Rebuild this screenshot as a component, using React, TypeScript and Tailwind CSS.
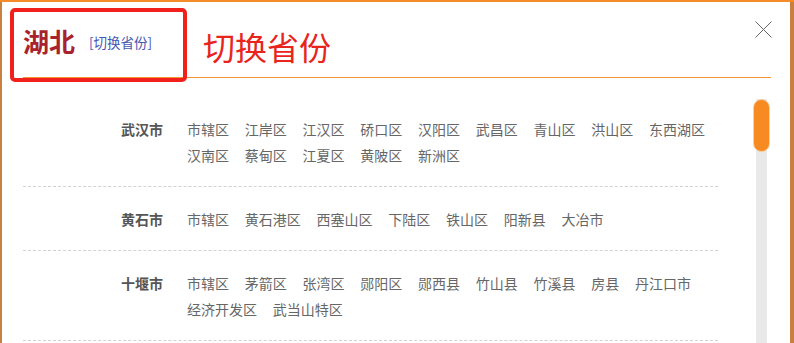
import React from "react";

const cities: { name: string; districts: string[] }[] = [
  {
    name: "武汉市",
    districts: ["市辖区", "江岸区", "江汉区", "硚口区", "汉阳区", "武昌区", "青山区", "洪山区", "东西湖区", "汉南区", "蔡甸区", "江夏区", "黄陂区", "新洲区"],
  },
  {
    name: "黄石市",
    districts: ["市辖区", "黄石港区", "西塞山区", "下陆区", "铁山区", "阳新县", "大冶市"],
  },
  {
    name: "十堰市",
    districts: ["市辖区", "茅箭区", "张湾区", "郧阳区", "郧西县", "竹山县", "竹溪县", "房县", "丹江口市", "经济开发区", "武当山特区"],
  },
];

export default function App() {
  return (
    <div
      className="relative h-[343px] w-[794px] overflow-hidden bg-[#c9803f] pl-[2px] pr-[4px] pt-[2px]"
      style={{ fontFamily: '"Noto Sans CJK SC", "Noto Sans", sans-serif' }}
    >
      <div className="absolute left-0 top-0 h-[2px] w-[794px] bg-[#f68b2a]" />
      <div className="relative h-[400px] bg-white pl-[21px] pr-[19px]">
        {/* header */}
        <div className="flex h-[75px] items-center pt-[3px]">
          <span className="text-[26px] font-bold leading-none text-[#a8232b]">湖北</span>
          <span className="ml-[14px] mt-[3px] text-[13.5px] leading-none text-[#4656b4]">[切换省份]</span>
        </div>
        <div className="h-px bg-[#f29535]" />

        {/* annotation */}
        <div className="absolute left-[8px] top-[6px] h-[74px] w-[177px] rounded-[5px] border-[4px] border-[#f2201a]" />
        <div className="absolute left-[201px] top-[24px] text-[32px] leading-[40px] text-[#e8241d]">切换省份</div>

        {/* close */}
        <svg className="absolute left-[753px] top-[19px]" width="17" height="17" viewBox="0 0 17 17">
          <path d="M0.5 0.5 L16.5 16.5 M16.5 0.5 L0.5 16.5" stroke="#666" strokeWidth="1" fill="none" />
        </svg>

        {/* body */}
        <div className="flex pt-[19px]">
          <div className="w-[695px]">
            {cities.map((c) => (
              <div key={c.name} className="flex border-b border-dashed border-[#d2d2d2] pb-[18px] pt-[19px]">
                <div className="w-[164px] shrink-0 pr-[24px] text-right text-[14px] font-bold leading-[26px] text-[#555]">
                  {c.name}
                </div>
                <div className="flex flex-1 flex-wrap gap-x-[15.75px] text-[14px] leading-[26px] text-[#666]">
                  {c.districts.map((d) => (
                    <span key={d}>{d}</span>
                  ))}
                </div>
              </div>
            ))}
          </div>
        </div>

        {/* scrollbar */}
        <div className="absolute left-[754px] top-[97px] h-[300px] w-[11px] bg-[#e9e9e9]" />
        <div className="absolute left-[751px] top-[97px] h-[53px] w-[17px] rounded-full border border-[#f6d2a8] bg-[#f78a20]" />
      </div>
    </div>
  );
}
